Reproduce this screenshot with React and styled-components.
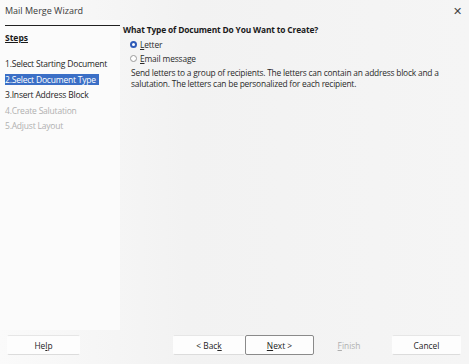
import styled, { createGlobalStyle } from "styled-components";

const GlobalStyle = createGlobalStyle`
  html, body {
    margin: 0;
    padding: 0;
    background: #f3f3f3;
  }
  body {
    font-family: "Open Sans", "Noto Sans", sans-serif;
    color: #1a1a1a;
  }
`;

const Window = styled.div`
  width: 469px;
  height: 364px;
  display: flex;
  flex-direction: column;
  background: linear-gradient(90deg, #fafafa 0%, #f2f2f2 40%, #f5f5f5 100%);
  overflow: hidden;
`;

const TitleBar = styled.div`
  height: 20px;
  display: flex;
  align-items: center;
  justify-content: space-between;
  padding: 0 7px 0 5px;
  font-size: 9px;
  color: #3a3a3a;
`;

const Close = styled.span`
  font-size: 11px;
  font-weight: 300;
  color: #444;
`;

const Body = styled.div`
  flex: 1;
  display: flex;
`;

const Sidebar = styled.div`
  width: 115px;
  padding-left: 5px;
  display: flex;
  flex-direction: column;
  background: #fbfbfb;
`;

const Rule = styled.div`
  height: 1px;
  background: #222;
  margin-top: 5px;
`;

const StepsTitle = styled.div`
  font-size: 8.5px;
  font-weight: 700;
  text-decoration: underline;
  margin-top: 6px;
  margin-bottom: 15px;
`;

const Step = styled.div`
  font-size: 8.5px;
  line-height: 11px;
  height: 11px;
  margin-bottom: 4.6px;
  width: fit-content;
  padding-right: 3px;
  letter-spacing: -0.2px;
  color: ${(p) => (p.$active ? "#fff" : p.$disabled ? "#b0b0b0" : "#1e1e1e")};
  background: ${(p) => (p.$active ? "#3b6fc6" : "transparent")};
`;

const Content = styled.div`
  flex: 1;
  padding: 4px 0 0 3px;
  display: flex;
  flex-direction: column;
`;

const Heading = styled.div`
  font-size: 8.4px;
  font-weight: 700;
  letter-spacing: -0.15px;
  margin-bottom: 2px;
`;

const Option = styled.label`
  display: flex;
  align-items: center;
  gap: 3px;
  margin-left: 7px;
  height: 14px;
  font-size: 8.4px;
  letter-spacing: -0.15px;
  color: #2a2a2a;
`;

const Radio = styled.span`
  width: 7px;
  height: 7px;
  border-radius: 50%;
  box-sizing: border-box;
  border: ${(p) => (p.$checked ? "2px solid #2f5bb8" : "1px solid #9a9a9a")};
  background: #fff;
`;

const Key = styled.span`
  text-decoration: underline;
`;

const Description = styled.p`
  margin: 2px 0 0 8px;
  width: 320px;
  font-size: 8.4px;
  line-height: 11px;
  letter-spacing: -0.2px;
  color: #2a2a2a;
`;

const Footer = styled.div`
  height: 34px;
  display: flex;
  align-items: flex-start;
  padding: 5px 0 0 7px;
  box-sizing: border-box;
`;

const Button = styled.button`
  width: ${(p) => p.$w || 72}px;
  height: 20px;
  margin-left: ${(p) => p.$ml || 0}px;
  font-family: inherit;
  font-size: 8.4px;
  color: ${(p) => (p.$disabled ? "#b0b0b0" : "#222")};
  background: ${(p) => (p.$disabled ? "transparent" : "#fdfdfd")};
  border: 1px solid ${(p) => (p.$default ? "#8a8a8a" : "transparent")};
  border-top-color: ${(p) => (p.$default ? "#8a8a8a" : p.$disabled ? "transparent" : "#e6e6e6")};
  border-bottom-color: ${(p) => (p.$default ? "#8a8a8a" : p.$disabled ? "transparent" : "#dcdcdc")};
  border-radius: 2px;
  padding: 0;
`;

const steps = [
  { label: "1.Select Starting Document" },
  { label: "2.Select Document Type", active: true },
  { label: "3.Insert Address Block" },
  { label: "4.Create Salutation", disabled: true },
  { label: "5.Adjust Layout", disabled: true },
];

export default function App() {
  return (
    <Window>
      <GlobalStyle />
      <TitleBar>
        <span>Mail Merge Wizard</span>
        <Close>✕</Close>
      </TitleBar>
      <Body>
        <Sidebar>
          <Rule />
          <StepsTitle>Steps</StepsTitle>
          {steps.map((s) => (
            <Step key={s.label} $active={s.active} $disabled={s.disabled}>
              {s.label}
            </Step>
          ))}
        </Sidebar>
        <Content>
          <Heading>What Type of Document Do You Want to Create?</Heading>
          <Option>
            <Radio $checked />
            <span>
              <Key>L</Key>etter
            </span>
          </Option>
          <Option>
            <Radio />
            <span>
              <Key>E</Key>mail message
            </span>
          </Option>
          <Description>
            Send letters to a group of recipients. The letters can contain an
            address block and a salutation. The letters can be personalized for
            each recipient.
          </Description>
        </Content>
      </Body>
      <Footer>
        <Button $w={73}>
          He<Key>l</Key>p
        </Button>
        <Button $w={72} $ml={93}>
          &lt; Bac<Key>k</Key>
        </Button>
        <Button $w={69} $default>
          <Key>N</Key>ext &gt;
        </Button>
        <Button $w={70} $disabled>
          <Key>F</Key>inish
        </Button>
        <Button $w={69} $ml={8}>
          Cancel
        </Button>
      </Footer>
    </Window>
  );
}
